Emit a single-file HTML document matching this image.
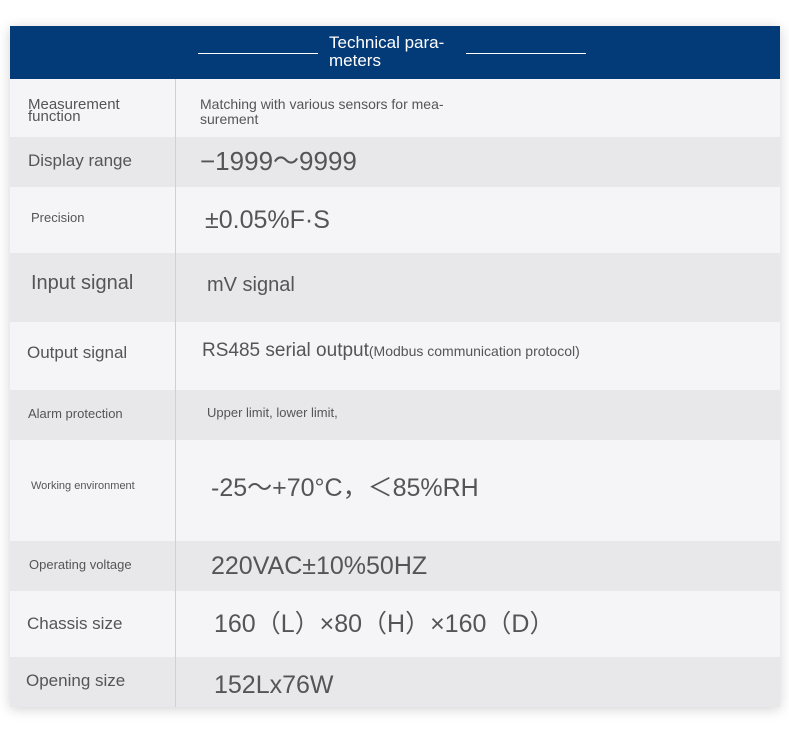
<!DOCTYPE html>
<html><head><meta charset="utf-8"><style>
body{margin:0;width:789px;height:743px;background:#fff;position:relative;overflow:hidden;font-family:"Liberation Sans Narrow","Liberation Sans","Noto Sans CJK SC",sans-serif;color:#555}
.t{position:absolute;left:10px;top:26px;width:770px;height:681px;box-shadow:0 2px 12px rgba(0,0,0,.18);border:1px solid #c8c8cc;box-sizing:border-box}
.h{position:absolute;left:10px;top:26px;width:770px;height:53px;background:#033a78}
.r{position:absolute;left:10px;width:770px}
.l{background:#f5f5f7}.g{background:#e8e8ea}
.v{position:absolute;left:175px;top:79px;width:1px;height:628px;background:#d0d0d4}
.x{position:absolute;white-space:nowrap;line-height:1}
.line{position:absolute;height:1px;background:#fff;top:53px}
</style></head><body>
<div class="t"></div>
<div class="h"></div>
<div class="line" style="left:198px;width:120px"></div>
<div class="line" style="left:466px;width:120px"></div>
<div class="x" style="left:329px;top:34px;color:#fff;font-size:17px;line-height:18px">Technical para-<br>meters</div>
<div class="r l" style="top:79px;height:58px"></div>
<div class="r g" style="top:137px;height:50px"></div>
<div class="r l" style="top:187px;height:66px"></div>
<div class="r g" style="top:253px;height:69px"></div>
<div class="r l" style="top:322px;height:68px"></div>
<div class="r g" style="top:390px;height:50px"></div>
<div class="r l" style="top:440px;height:101px"></div>
<div class="r g" style="top:541px;height:50px"></div>
<div class="r l" style="top:591px;height:66px"></div>
<div class="r g" style="top:657px;height:50px"></div>
<div class="v"></div>
<div class="x" style="left:28px;top:99px;font-size:15px;line-height:12px">Measurement<br>function</div>
<div class="x" style="left:200px;top:97px;font-size:14px;line-height:15px">Matching with various sensors for mea-<br>surement</div>
<div class="x" style="left:28px;top:152px;font-size:17px">Display range</div>
<div class="x" style="left:200px;top:148px;font-size:26px">−1999〜9999</div>
<div class="x" style="left:31px;top:211px;font-size:13px">Precision</div>
<div class="x" style="left:205px;top:208px;font-size:25px">±0.05%F·S</div>
<div class="x" style="left:31px;top:273px;font-size:20px">Input signal</div>
<div class="x" style="left:207px;top:275px;font-size:20px">mV signal</div>
<div class="x" style="left:27px;top:344px;font-size:17px">Output signal</div>
<div class="x" style="left:202px;top:341px;font-size:19px">RS485 serial output<span style="font-size:14px">(Modbus communication protocol)</span></div>
<div class="x" style="left:28px;top:407px;font-size:13px">Alarm protection</div>
<div class="x" style="left:207px;top:406px;font-size:13px">Upper limit, lower limit,</div>
<div class="x" style="left:31px;top:481px;font-size:11px">Working environment</div>
<div class="x" style="left:211px;top:476px;font-size:25px">-25〜+70°C，＜85%RH</div>
<div class="x" style="left:29px;top:558px;font-size:13px">Operating voltage</div>
<div class="x" style="left:211px;top:554px;font-size:25px">220VAC±10%50HZ</div>
<div class="x" style="left:27px;top:615px;font-size:17px">Chassis size</div>
<div class="x" style="left:214px;top:612px;font-size:25px">160（L）×80（H）×160（D）</div>
<div class="x" style="left:26px;top:672px;font-size:17px">Opening size</div>
<div class="x" style="left:214px;top:673px;font-size:25px">152Lx76W</div>
</body></html>
